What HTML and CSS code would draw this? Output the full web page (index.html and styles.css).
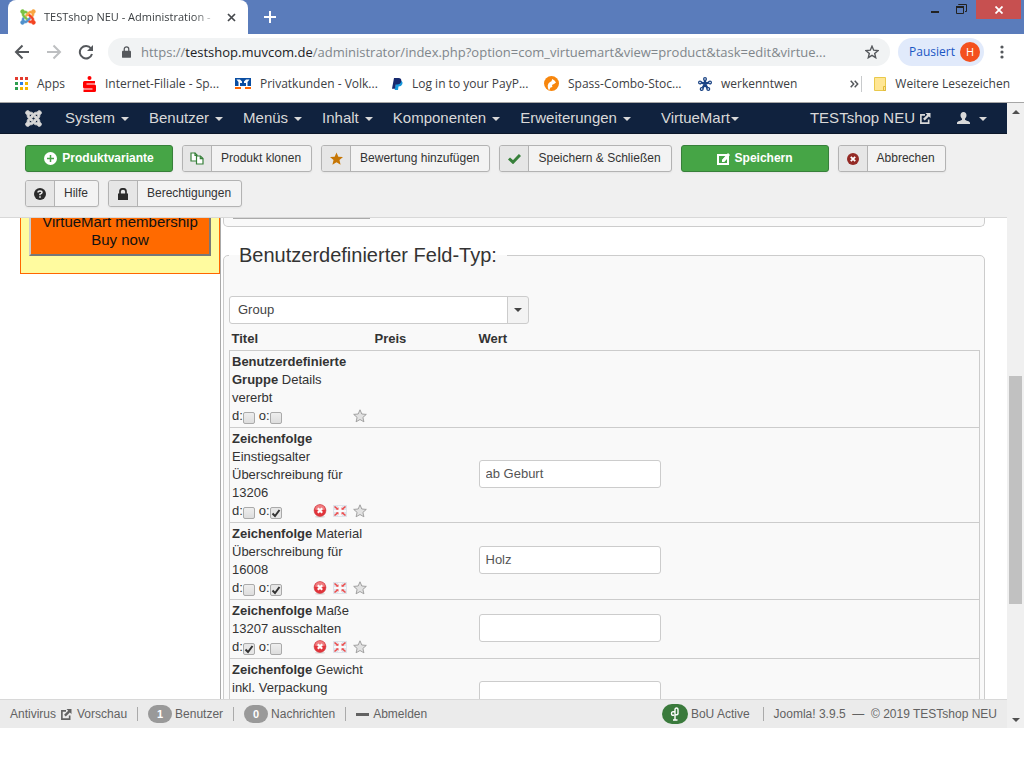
FILE: index.html
```html
<!DOCTYPE html>
<html lang="de">
<head>
<meta charset="utf-8">
<title>TESTshop NEU - Administration</title>
<link rel="stylesheet" href="styles.css">
</head>
<body>
<svg class="sprite" aria-hidden="true">
  <defs>
    <path id="knot" d="M16.7 14.8 14.2 17.3l-2.4 2.3-.4.5c-1.400 1.400-3.300 1.800-5.100 1.400-.3 1.400-1.600 2.500-3.100 2.500C1.400 24 0 22.500 0 20.800c0-1.500 1.100-2.800 2.500-3.100-.5-1.800 0-3.700 1.400-5.100l.2-.2 2.300 2.400-.2.200c-.8.8-.8 2 0 2.800.8.8 2 .8 2.800 0l.5-.5 2.300-2.400 2.500-2.500z"/>
    <symbol id="joomla" viewBox="0 0 24 24">
      <use href="#knot"/><use href="#knot" transform="rotate(90 12 12)"/><use href="#knot" transform="rotate(180 12 12)"/><use href="#knot" transform="rotate(270 12 12)"/>
    </symbol>
    <symbol id="external" viewBox="0 0 12 12">
      <path d="M6 2H1.500v9H10V7" fill="none" stroke="currentColor" stroke-width="1.800"/>
      <path d="M6.500 0H12v5.500L10.200 3.700 5.700 8.200 3.900 6.400 8.400 1.900z" fill="currentColor"/>
    </symbol>
    <symbol id="star" viewBox="0 0 14 14">
      <path d="M7 .8 8.800 5l4.500.4-3.400 3 1 4.400L7 10.500l-3.900 2.300 1-4.400-3.400-3L5.200 5z" fill="#e2e2e2" stroke="#999" stroke-width=".9"/>
    </symbol>
    <symbol id="delete" viewBox="0 0 14 14">
      <ellipse cx="7" cy="12.800" rx="5" ry="1" fill="#ddd"/>
      <circle cx="7" cy="6.500" r="5.900" fill="#e2343b" stroke="#c9343a" stroke-width=".6"/>
      <path d="M2 5.500a5 4.500 0 0 1 10 0Q7 7.500 2 5.500z" fill="#f07d80"/>
      <path d="m4.800 4.300 4.400 4.400m0-4.400L4.800 8.700" stroke="#fff" stroke-width="2.200"/>
    </symbol>
    <symbol id="move" viewBox="0 0 14 12">
      <path d="M0 0h14v12H0z" fill="#dfe3ea"/><path d="M5 1h4v10H5zM1 5h12v2H1z" fill="#f8f8fa"/>
      <path d="m1.500 1.500 3 2.500m8-2.500-3 2.500m-8 6.500 3-2.500m8 2.500-3-2.500" stroke="#ee4b4b" stroke-width="1.600"/>
      <path d="M5.500 2.200v2.600H3zM8.500 2.200v2.600H11zM5.500 9.800V7.200H3zM8.500 9.800V7.200H11z" fill="#ee4b4b"/>
    </symbol>
  </defs>
</svg>

<header class="chrome">
  <div class="tabstrip">
    <div class="tab">
      <svg class="i16" viewBox="-1 -1 26 26" stroke-width="1"><use href="#knot" fill="#5091cd" stroke="#5091cd"/><use href="#knot" fill="#7ac143" stroke="#7ac143" transform="rotate(90 12 12)"/><use href="#knot" fill="#f9a541" stroke="#f9a541" transform="rotate(180 12 12)"/><use href="#knot" fill="#f44321" stroke="#f44321" transform="rotate(270 12 12)"/></svg>
      <span class="tab-title">TESTshop NEU - Administration -</span>
      <button class="plain" aria-label="Tab schließen"><svg width="9" height="9" viewBox="0 0 9 9"><path d="m1 1 7 7m0-7L1 8" stroke="#45484c" stroke-width="1.700"/></svg></button>
    </div>
    <button class="plain new-tab" aria-label="Neuer Tab"><svg width="12" height="12" viewBox="0 0 12 12"><path d="M6 0v12M0 6h12" stroke="#fff" stroke-width="2"/></svg></button>
    <div class="window-buttons">
      <button class="plain" aria-label="Minimieren"><svg width="8" height="12" viewBox="0 0 8 12"><path d="M0 10h8" stroke="#222" stroke-width="2"/></svg></button>
      <button class="plain" aria-label="Wiederherstellen"><svg width="11" height="12" viewBox="0 0 11 12"><path d="M2.500 3V2.500h8v7H9" fill="none" stroke="#222"/><path d="M.5 4.500h7v7h-7z" fill="none" stroke="#222"/><path d="M0 5h8" stroke="#222" stroke-width="2"/></svg></button>
      <button class="plain win-close" aria-label="Schließen"><svg width="8" height="8" viewBox="0 0 8 8"><path d="m.5.5 7 7m0-7-7 7" stroke="#fff" stroke-width="1.800"/></svg></button>
    </div>
  </div>
  <div class="address-row">
    <button class="plain" aria-label="Zurück"><svg width="16" height="16" viewBox="0 0 16 16"><path d="M15 8H2m6.500-6.500L2 8l6.500 6.500" fill="none" stroke="#55585c" stroke-width="2"/></svg></button>
    <button class="plain" aria-label="Vorwärts"><svg width="16" height="16" viewBox="0 0 16 16"><path d="M1 8h13M7.500 1.500 14 8l-6.500 6.500" fill="none" stroke="#bdbfc1" stroke-width="2"/></svg></button>
    <button class="plain" aria-label="Neu laden"><svg width="16" height="16" viewBox="0 0 16 16"><path d="M13 4.500A6.200 6.200 0 1 0 14 10" fill="none" stroke="#55585c" stroke-width="2"/><path d="M15 1v6H9z" fill="#55585c"/></svg></button>
    <div class="omnibox">
      <svg width="9" height="12" viewBox="0 0 10 13"><path d="M1 5h8a1 1 0 0 1 1 1v6a1 1 0 0 1-1 1H1a1 1 0 0 1-1-1V6a1 1 0 0 1 1-1z" fill="#55585c"/><path d="M2.500 6V3.300a2.500 2.500 0 0 1 5 0V6" fill="none" stroke="#55585c" stroke-width="1.400"/></svg>
      <span class="url">https://<b>testshop.muvcom.de</b>/administrator/index.php?option=com_virtuemart&amp;view=product&amp;task=edit&amp;virtue...</span>
      <svg width="14" height="14" viewBox="0 0 14 14"><path d="m7 1.200 1.700 4 4.300.4-3.300 2.800 1 4.300L7 10.400l-3.700 2.300 1-4.300L1 5.600l4.300-.4z" fill="none" stroke="#55585c" stroke-width="1.400"/></svg>
    </div>
    <button class="profile">Pausiert <span class="avatar">H</span></button>
    <button class="plain" aria-label="Menü"><svg width="4" height="14" viewBox="0 0 4 14" fill="#55585c"><circle cx="2" cy="2" r="1.600"/><circle cx="2" cy="7" r="1.600"/><circle cx="2" cy="12" r="1.600"/></svg></button>
  </div>
  <nav class="bookmarks">
    <a href="#"><svg width="13" height="13" viewBox="0 0 13 13"><path d="M0 0h3v3H0zM5 0h3v3H5zM10 0h3v3h-3z" fill="#e33b2e"/><path d="M0 5h3v3H0zM0 10h3v3H0z" fill="#2e9e4f"/><path d="M5 5h3v3H5z" fill="#2b7de9"/><path d="M10 5h3v3h-3zM5 10h3v3H5zM10 10h3v3h-3z" fill="#f4b400"/></svg>Apps</a>
    <a href="#"><svg width="13" height="16" viewBox="0 0 13 16" fill="#f00"><circle cx="6.500" cy="2" r="2"/><path d="M1.500 5H12v2.500H3.500v1H11.500A1.500 1.500 0 0 1 13 10v4.500a1.500 1.500 0 0 1-1.500 1.500H.5v-2.500h9v-1H1.500A1.500 1.500 0 0 1 0 11V6.500A1.500 1.500 0 0 1 1.500 5z"/></svg>Internet-Filiale - Sp...</a>
    <a href="#"><svg width="16" height="11" viewBox="0 0 16 11"><path d="M0 0h16v8H0z" fill="#0a4ea2"/><path d="M1.500 1.500H5L7 3.500V5H5v3H3.500V4zM14.500 1.500H11L9 3.500V5h2v3h1.500V4z" fill="#fff"/><path d="M0 9h6v2H0zM10 9h6v2h-6z" fill="#f60"/></svg>Privatkunden - Volk...</a>
    <a href="#"><svg width="11" height="12" viewBox="0 0 11 12"><path d="M4 3h5.500q1.500 1 .9 3Q9.500 8.500 6.500 8.500L6 12H2.700z" fill="#1799dc"/><path d="M2 0h4.500q3.400.2 2.800 3.300Q8.500 6.500 5 6.500H3.700L3 10.700H0z" fill="#16296e"/></svg>Log in to your PayP...</a>
    <a href="#"><svg width="15" height="15" viewBox="0 0 15 15"><circle cx="7.500" cy="7.500" r="7.500" fill="#f7860d"/><path d="M5 14.500Q2 8.500 6 6l1.500-.7.700-2.300L10.500 4.500 12 6.500 10 8Q7 8.500 8.500 11l-2 .5z" fill="#fff"/></svg>Spass-Combo-Stoc...</a>
    <a href="#"><svg width="14" height="14" viewBox="0 0 14 14" stroke="#1a4384" fill="#fff" stroke-width="1.200"><path d="m7 7-5-2m5 2 5-2M7 7V2m0 5-3 5m3-5 3 5" stroke-width="2.400"/><circle cx="7" cy="2" r="1.400"/><circle cx="2" cy="5.500" r="1.400"/><circle cx="12" cy="5.500" r="1.400"/><circle cx="3.700" cy="12" r="1.400"/><circle cx="10.300" cy="12" r="1.400"/></svg>werkenntwen</a>
    <button class="plain" aria-label="Weitere"><svg width="9" height="8" viewBox="0 0 9 8"><path d="m.7.7 3 3.300-3 3.300m4-6.600 3 3.300-3 3.300" fill="none" stroke="#55585c" stroke-width="1.500"/></svg></button>
    <a href="#" class="more"><svg width="12" height="14" viewBox="0 0 12 14"><path d="M.5.500h11v13H.5z" fill="#ffe694" stroke="#e9c94c"/><path d="M9.500 9.500h2v4h-2z" fill="#ffe694" stroke="#e0b93a"/></svg>Weitere Lesezeichen</a>
  </nav>
</header>

<div class="viewport">
  <div class="page">
    <nav class="topnav">
      <a href="#" class="brand" aria-label="Joomla"><svg width="17" height="17" viewBox="-1 -1 26 26" fill="#d9d9d9" stroke="#d9d9d9" stroke-width="1.500"><use href="#knot"/><use href="#knot" transform="rotate(90 12 12)"/><use href="#knot" transform="rotate(180 12 12)"/><use href="#knot" transform="rotate(270 12 12)"/></svg></a>
      <a href="#" class="drop">System</a>
      <a href="#" class="drop">Benutzer</a>
      <a href="#" class="drop">Menüs</a>
      <a href="#" class="drop">Inhalt</a>
      <a href="#" class="drop">Komponenten</a>
      <a href="#" class="drop">Erweiterungen</a>
      <a href="#" class="drop tight">VirtueMart</a>
      <a href="#" class="site">TESTshop NEU <svg width="12" height="11"><use href="#external"/></svg></a>
      <a href="#" class="drop user" aria-label="Benutzerkonto"><svg width="13" height="12" viewBox="0 0 13 12" fill="#d9d9d9"><path d="M6.500 0C8.400 0 9.500 1.300 9.500 3.300 9.500 5 8.700 6 8 6.700v1c.5 1 5 1 5 3.300v1H0v-1c0-2.300 4.500-2.300 5-3.300v-1C4.300 6 3.500 5 3.500 3.300 3.500 1.300 4.600 0 6.500 0z"/></svg></a>
    </nav>

    <div class="toolbar">
      <button class="btn green"><svg width="13" height="13" viewBox="0 0 13 13"><circle cx="6.500" cy="6.500" r="6.500" fill="#fff"/><path d="M6.500 3v7M3 6.500h7" stroke="#46a546" stroke-width="1.500"/></svg>Produktvariante</button>
      <button class="btn"><span class="ico"><svg width="14" height="13" viewBox="0 0 14 13" fill="#fff" stroke="#37803a" stroke-width="1.200"><path d="M1 1h4l2 2v6H1z"/><path d="M5 .8v2.500h2" fill="none"/><path d="M6.500 4h4L13 6.500V12H6.500z"/><path d="M10.300 4v2.700H13" fill="none"/></svg></span><span>Produkt klonen</span></button>
      <button class="btn"><span class="ico"><svg width="13" height="13" viewBox="0 0 14 14"><path d="m7 .5 2 4.600 5 .4-3.800 3.200 1.200 4.900L7 11l-4.400 2.600 1.200-4.900L0 5.500l5-.4z" fill="#c67605"/></svg></span><span>Bewertung hinzufügen</span></button>
      <button class="btn"><span class="ico"><svg width="13" height="10" viewBox="0 0 13 10"><path d="m1 4.500 4 3.700L12 1" fill="none" stroke="#37803a" stroke-width="3"/></svg></span><span>Speichern &amp; Schließen</span></button>
      <button class="btn green"><svg width="13" height="12" viewBox="0 0 13 12"><path d="M0 1h12v11H0z" fill="#fff"/><path d="M2 10V3h7L5 7v2h2l3-3v4z" fill="#46a546"/><path d="m5 7 6-7 2 2-6 7H5z" fill="#fff"/></svg>Speichern</button>
      <button class="btn"><span class="ico"><svg width="12" height="12" viewBox="0 0 12 12"><circle cx="6" cy="6" r="6" fill="#942a25"/><path d="m3.800 3.800 4.400 4.400m0-4.400L3.800 8.200" stroke="#fff" stroke-width="1.800"/></svg></span><span>Abbrechen</span></button>
      <button class="btn"><span class="ico"><svg width="12" height="12" viewBox="0 0 12 12"><circle cx="6" cy="6" r="6" fill="#2b2b2b"/><path d="M4 4.600Q4 3 6 3t2 1.500Q8 5.500 6 6.200V7.300" fill="none" stroke="#eee" stroke-width="1.500"/><path d="M5.200 8.200h1.600v1.500H5.200z" fill="#eee"/></svg></span><span>Hilfe</span></button>
      <button class="btn"><span class="ico"><svg width="10" height="12" viewBox="0 0 10 12"><path d="M0 5.500h10V12H0z" fill="#2b2b2b"/><path d="M2 6V3.500a3 2.700 0 0 1 6 0V6" fill="none" stroke="#2b2b2b" stroke-width="1.700"/></svg></span><span>Berechtigungen</span></button>
    </div>

    <div class="scrollarea">
      <aside class="sidebar">
        <div class="promo"><button>VirtueMart membership<br>Buy now</button></div>
      </aside>
      <main class="content">
        <div class="panel panel-end"><div class="field-edge"></div></div>
        <fieldset class="panel">
          <legend>Benutzerdefinierter Feld-Typ:</legend>
          <select class="type-select" aria-label="Feld-Typ"><option>Group</option></select>
          <table class="fields">
            <thead><tr><th class="c1">Titel</th><th class="c2">Preis</th><th>Wert</th></tr></thead>
            <tbody>
              <tr><td><b>Benutzerdefinierte<br>Gruppe</b> Details<br>vererbt
                <div class="flags"><label>d:<input type="checkbox"></label><label>o:<input type="checkbox"></label><span class="acts"><svg width="14" height="14"><use href="#star"/></svg></span></div></td><td></td><td></td></tr>
              <tr><td><b>Zeichenfolge</b><br>Einstiegsalter<br>Überschreibung für<br>13206
                <div class="flags"><label>d:<input type="checkbox"></label><label>o:<input type="checkbox" checked></label><span class="acts"><svg width="14" height="14"><use href="#delete"/></svg><svg width="14" height="12"><use href="#move"/></svg><svg width="14" height="14"><use href="#star"/></svg></span></div></td><td></td><td><input type="text" aria-label="Einstiegsalter" value="ab Geburt"></td></tr>
              <tr><td><b>Zeichenfolge</b> Material<br>Überschreibung für<br>16008
                <div class="flags"><label>d:<input type="checkbox"></label><label>o:<input type="checkbox" checked></label><span class="acts"><svg width="14" height="14"><use href="#delete"/></svg><svg width="14" height="12"><use href="#move"/></svg><svg width="14" height="14"><use href="#star"/></svg></span></div></td><td></td><td><input type="text" aria-label="Material" value="Holz"></td></tr>
              <tr><td><b>Zeichenfolge</b> Maße<br>13207 ausschalten
                <div class="flags"><label>d:<input type="checkbox" checked></label><label>o:<input type="checkbox"></label><span class="acts"><svg width="14" height="14"><use href="#delete"/></svg><svg width="14" height="12"><use href="#move"/></svg><svg width="14" height="14"><use href="#star"/></svg></span></div></td><td></td><td><input type="text" aria-label="Maße"></td></tr>
              <tr class="last"><td><b>Zeichenfolge</b> Gewicht<br>inkl. Verpackung</td><td></td><td><input type="text" aria-label="Gewicht"></td></tr>
            </tbody>
          </table>
        </fieldset>
      </main>
    </div>

    <footer class="status">
      <a href="#">Antivirus</a>
      <a href="#" class="preview"><svg width="12" height="11"><use href="#external"/></svg>Vorschau</a>
      <span class="sep"></span>
      <a href="#"><span class="badge">1</span>Benutzer</a>
      <span class="sep"></span>
      <a href="#"><span class="badge">0</span>Nachrichten</a>
      <span class="sep"></span>
      <a href="#" class="logout"><span class="dash"></span>Abmelden</a>
      <span class="right"><span class="bou"><svg width="10" height="14" viewBox="0 0 10 14" fill="none" stroke="#fff" stroke-width="1.400"><path d="M5 13V2.500Q5 1 6.500 1T8 3v3.500Q8 8 5 8M5 5Q1.500 4 1.500 6.500T4 8M3 13h4.500"/></svg></span>BoU Active</span>
      <span class="sep"></span>
      <span>Joomla! 3.9.5 &nbsp;—&nbsp; © 2019 TESTshop NEU</span>
    </footer>
  </div>
  <div class="scrollbar"><span class="arrow up"></span><span class="thumb"></span><span class="arrow down"></span></div>
</div>
</body>
</html>
```
FILE: styles.css
```css
* { box-sizing: border-box; }
body {
  margin: 0;
  height: 100vh;
  padding-bottom: 40px;
  display: flex;
  flex-direction: column;
  overflow: hidden;
  background: #fff;
  font: 13px/18px "Liberation Sans", Arial, sans-serif;
  color: #333;
}
a { color: inherit; text-decoration: none; }
svg { display: block; flex: none; }
.sprite { position: absolute; width: 0; height: 0; }
.plain { border: 0; padding: 0; background: none; display: flex; align-items: center; justify-content: center; }
.i16 { width: 16px; height: 16px; }

/* Browser frame */
.chrome { font: 12px/16px "Open Sans", "Noto Sans", sans-serif; border-bottom: 1px solid #a6a6a6; flex: none; }
.tabstrip { height: 34px; background: #5a7cbb; display: flex; padding-left: 8px; }
.tab { width: 240px; background: #fff; border-radius: 8px 8px 0 0; display: flex; align-items: center; gap: 8px; padding: 0 12px; }
.tab-title { flex: 1; font-size: 11px; white-space: nowrap; color: #3c4043; -webkit-mask-image: linear-gradient(to right, #000 85%, transparent); mask-image: linear-gradient(to right, #000 85%, transparent); }
.new-tab { width: 44px; }
.window-buttons { margin-left: auto; display: flex; align-items: flex-start; gap: 17px; padding-right: 3px; }
.window-buttons .plain { margin-top: 2px; }
.window-buttons .win-close { margin: 0 0 0 -8px; width: 45px; height: 19px; background: #c75050; }
.address-row { display: flex; align-items: center; gap: 16px; padding: 4px 20px 3px 14px; }
.omnibox { flex: 1; min-width: 0; height: 28px; border-radius: 14px; background: #f1f3f4; display: flex; align-items: center; gap: 10px; padding: 0 11px 0 14px; margin: 0 -8px 0 -2px; }
.url { flex: 1; white-space: nowrap; font-size: 13px; color: #80868b; }
.url b { font-weight: 400; color: #202124; }
.profile { border: 0; height: 28px; width: 86px; border-radius: 14px; background: #e1eafb; color: #1a56c4; font: inherit; display: flex; align-items: center; justify-content: space-between; padding: 0 4px 0 11px; }
.avatar { width: 20px; height: 20px; border-radius: 50%; background: #f4511e; color: #fff; font-size: 11px; line-height: 20px; text-align: center; }
.bookmarks { height: 33px; display: grid; grid-template-columns: 68px 152px 157px 152px 154px 150px 1fr auto; align-items: center; padding: 0 14px 4px 15px; color: #3c4043; white-space: nowrap; }
.bookmarks a { display: flex; align-items: center; gap: 9px; }
.bookmarks .more { border-left: 1px solid #c8cacc; padding-left: 12px; }

/* Page */
.viewport { flex: 1; min-height: 0; display: flex; }
.page { flex: 1; min-width: 0; display: flex; flex-direction: column; }
.topnav { background: #10223e; border-bottom: 1px solid #0b172a; height: 31px; flex: none; display: flex; align-items: center; gap: 20px; padding: 0 20px 0 25px; font-size: 15px; color: #d9d9d9; white-space: nowrap; }
.brand { width: 20px; display: flex; }
.topnav .drop, .topnav .site { display: flex; align-items: center; gap: 6px; }
.drop::after { content: ""; border: 4px solid transparent; border-top-color: currentColor; border-bottom: 0; margin-top: 2px; }
.topnav .tight { gap: 1px; margin-left: 10px; }
.topnav .site { gap: 4px; margin-left: auto; }
.topnav .user { gap: 9px; margin-left: 6px; }

.toolbar { flex: none; background: #f0f0f0; border-bottom: 1px solid #d8d8d8; padding: 11px 25px 10px; display: flex; flex-wrap: wrap; gap: 8px 9px; }
.btn { height: 27px; padding: 0; display: flex; align-items: stretch; border: 1px solid #b3b3b3; border-radius: 3px; background: #f3f3f3; font: 12px/25px "Liberation Sans", Arial, sans-serif; color: #333; box-shadow: 0 1px 2px rgba(0,0,0,.05); overflow: hidden; white-space: nowrap; }
.btn > span { padding: 0 10px 0 9px; }
.btn .ico { width: 29px; padding: 0; background: #e6e6e6; border-right: 1px solid #b3b3b3; display: flex; align-items: center; justify-content: center; }
.green { width: 148px; background: #46a546; border-color: #37803a; color: #fff; font-weight: 700; align-items: center; justify-content: center; gap: 5px; }

.scrollarea { flex: 1; min-height: 0; overflow: hidden; display: flex; align-items: stretch; }
.sidebar { flex: 0 0 220px; padding-left: 20px; }
.promo { background: #fffb9f; border: 1px solid #f60; border-top: 0; padding: 0 8px 17px; }
.promo button { width: 100%; margin-top: -7px; padding: 0 0 5px; display: block; background: #ff6a00; border: 2px outset #ccc; font: 15px/18px "Liberation Sans", Arial, sans-serif; color: #111; white-space: nowrap; }
.content { flex: 1; min-width: 0; height: 600px; border-left: 1px solid #aaa; padding: 0 22px 0 2px; }
.panel { margin: 0; border: 1px solid #ccc; border-radius: 5px; background: #f9f9f9; padding: 29px 4px 20px 5px; min-width: 0; }
.panel-end { border-top: 0; border-radius: 0 0 5px 5px; height: 9px; padding: 0 9px; margin-bottom: 16px; }
.field-edge { width: 137px; height: 1px; background: #aaa; }
legend { font-size: 20px; line-height: 24px; padding: 0 10px; }
.type-select { appearance: none; display: block; width: 300px; height: 28px; border: 1px solid #ccc; border-radius: 3px; padding: 0 8px; font: inherit; color: #444; background: url("data:image/svg+xml,%3Csvg xmlns='http://www.w3.org/2000/svg' width='21' height='26'%3E%3Cpath d='M0 0h21v26H0z' fill='%23f3f3f3'/%3E%3Cpath d='M.5 0v26' stroke='%23ccc'/%3E%3Cpath d='M7 11h8l-4 4z' fill='%23444'/%3E%3C/svg%3E") right center no-repeat #fff; }
.fields { width: 100%; table-layout: fixed; border-collapse: collapse; }
.fields th { text-align: left; padding: 6px 2px 2px; }
.c1 { width: 143px; }
.c2 { width: 104px; }
.fields tbody { border: 1px solid #ccc; }
.fields tbody tr { border-top: 1px solid #ccc; }
.fields td { padding: 2px 6px 0 2px; }
.fields .last td { height: 77px; vertical-align: top; }
.flags { height: 20px; display: flex; align-items: flex-start; gap: 4px; }
.flags label { display: flex; }
.flags input { appearance: none; width: 12px; height: 12px; margin: 5px 0 0; border: 1px solid #aaa; border-radius: 2px; background: linear-gradient(#eee, #ddd); }
.flags input:checked { background: url("data:image/svg+xml,%3Csvg xmlns='http://www.w3.org/2000/svg' width='10' height='10'%3E%3Cpath d='M1.500 5.500 4 8l4.500-6' fill='none' stroke='%23333' stroke-width='2'/%3E%3C/svg%3E") center no-repeat #e6e6e6; }
.acts { margin-left: auto; padding-top: 2px; display: flex; align-items: center; gap: 6px; }
.fields input[type="text"] { display: block; width: 182px; height: 28px; margin-bottom: 5px; border: 1px solid #ccc; border-radius: 3px; background: #fff; padding: 0 6px; font: inherit; color: #555; }
.fields .last input[type="text"] { margin-top: 20px; }

.status { position: relative; flex: none; height: 29px; background: #ebebeb; border-top: 1px solid #d8d8d8; padding: 0 10px; display: flex; align-items: center; font-size: 12px; color: #626262; white-space: nowrap; }
.status a, .status .right { display: flex; align-items: center; gap: 3px; }
.status .preview { gap: 5px; margin-left: 4px; }
.status .logout { gap: 4px; }
.sep { width: 1px; height: 14px; background: #aaa; margin: 0 10px; }
.badge { width: 24px; height: 18px; border-radius: 9px; background: #999; color: #fff; font-weight: 700; font-size: 11px; text-align: center; }
.dash { width: 13px; height: 3px; background: #626262; }
.status .right { margin: 0 3px 0 auto; }
.bou { width: 26px; height: 20px; border-radius: 10px; background: #3a7a3c; display: flex; align-items: center; justify-content: center; }

.scrollbar { flex: 0 0 17px; background: #f0f0f0; display: grid; grid-template-rows: 17px 256fr 228px 107fr 17px; justify-items: center; align-items: center; }
.thumb { grid-row: 3; width: 13px; height: 100%; background: #c1c1c1; }
.arrow { border: 4px solid transparent; }
.up { border-top: 0; border-bottom-color: #505050; }
.down { grid-row: 5; border-bottom: 0; border-top-color: #505050; }
```
